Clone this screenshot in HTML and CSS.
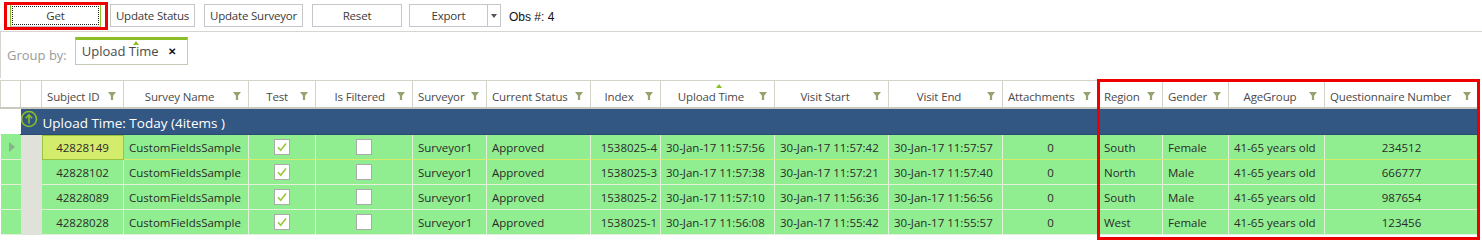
FILE: index.html
```html
<!DOCTYPE html>
<html>
    <head>
        <title>Survey Results</title>
        <link rel="stylesheet" href="styles.css">
    </head>
    <body>
        <div class="toolbar">
            <button class="tb-btn btn-get">Get</button>
            <button class="tb-btn btn-status">Update Status</button>
            <button class="tb-btn btn-surveyor">Update Surveyor</button>
            <button class="tb-btn btn-reset">Reset</button>
            <div class="split">
                <button class="tb-btn btn-export">Export</button>
                <button class="tb-btn btn-drop"><span class="caret"></span></button>
            </div>
            <span class="obs">Obs #: 4</span>
        </div>

        <div class="groupbar">
            <span class="group-label">Group by:</span>
            <div class="chip">
                <span class="chip-text">Upload T<span class="sort-mark"></span>ime</span>
                <span class="chip-close">&#x2715;</span>
            </div>
        </div>

        <div class="grid">
            <table>
                <colgroup>
                    <col style="width:20px"><col style="width:21px"><col style="width:82px">
                    <col style="width:125px"><col style="width:67px"><col style="width:97px">
                    <col style="width:74px"><col style="width:104px"><col style="width:70px">
                    <col style="width:114px"><col style="width:114px"><col style="width:114px">
                    <col style="width:96px"><col style="width:64px"><col style="width:66px">
                    <col style="width:96px"><col style="width:154px">
                </colgroup>
                <thead>
                    <tr>
                        <th></th>
                        <th></th>
                        <th><div class="hd left"><span class="hd-text">Subject ID</span><span class="filter"></span></div></th>
                        <th><div class="hd center"><span class="hd-text">Survey Name</span><span class="filter"></span></div></th>
                        <th><div class="hd right"><span class="hd-text">Test</span><span class="filter"></span></div></th>
                        <th><div class="hd right"><span class="hd-text">Is Filtered</span><span class="filter"></span></div></th>
                        <th><div class="hd left"><span class="hd-text">Surveyor</span><span class="filter"></span></div></th>
                        <th><div class="hd left"><span class="hd-text">Current Status</span><span class="filter"></span></div></th>
                        <th><div class="hd center"><span class="hd-text">Index</span><span class="filter"></span></div></th>
                        <th class="sorted"><div class="hd center"><span class="hd-text">Upload Time</span><span class="filter"></span></div></th>
                        <th><div class="hd center"><span class="hd-text">Visit Start</span><span class="filter"></span></div></th>
                        <th><div class="hd center"><span class="hd-text">Visit End</span><span class="filter"></span></div></th>
                        <th><div class="hd left"><span class="hd-text">Attachments</span><span class="filter"></span></div></th>
                        <th><div class="hd left"><span class="hd-text">Region</span><span class="filter"></span></div></th>
                        <th><div class="hd left"><span class="hd-text">Gender</span><span class="filter"></span></div></th>
                        <th><div class="hd center"><span class="hd-text">AgeGroup</span><span class="filter"></span></div></th>
                        <th><div class="hd left"><span class="hd-text">Questionnaire Number</span><span class="filter"></span></div></th>
                    </tr>
                </thead>
                <tbody>
                    <tr class="group-row">
                        <td class="blank"></td>
                        <td colspan="16">
                            <div class="group-title">
                                <svg class="group-icon" viewBox="0 0 18 18" aria-hidden="true">
                                    <circle cx="9" cy="9" r="7.5" fill="none" stroke="#8cbf26" stroke-width="1.6" />
                                    <path d="M9 13.5V5M5.8 8.2L9 5l3.2 3.2" fill="none" stroke="#8cbf26" stroke-width="1.6" />
                                </svg>
                                Upload Time: Today (4items )
                            </div>
                        </td>
                    </tr>
                    <tr class="data-row current">
                        <td class="ind"><span class="arrow"></span></td>
                        <td class="gutter"></td>
                        <td class="c focus">42828149</td>
                        <td class="l">CustomFieldsSample</td>
                        <td class="c"><span class="box checked"><svg viewBox="0 0 14 14"><path d="M3 7.2l2.7 3L11 3.5" /></svg></span></td>
                        <td class="c"><span class="box"></span></td>
                        <td class="l">Surveyor1</td>
                        <td class="l">Approved</td>
                        <td class="r">1538025-4</td>
                        <td class="l">30-Jan-17 11:57:56</td>
                        <td class="l">30-Jan-17 11:57:42</td>
                        <td class="l">30-Jan-17 11:57:57</td>
                        <td class="c">0</td>
                        <td class="l">South</td>
                        <td class="l">Female</td>
                        <td class="l">41-65 years old</td>
                        <td class="c">234512</td>
                    </tr>
                    <tr class="data-row">
                        <td class="ind"></td>
                        <td class="gutter"></td>
                        <td class="c">42828102</td>
                        <td class="l">CustomFieldsSample</td>
                        <td class="c"><span class="box checked"><svg viewBox="0 0 14 14"><path d="M3 7.2l2.7 3L11 3.5" /></svg></span></td>
                        <td class="c"><span class="box"></span></td>
                        <td class="l">Surveyor1</td>
                        <td class="l">Approved</td>
                        <td class="r">1538025-3</td>
                        <td class="l">30-Jan-17 11:57:38</td>
                        <td class="l">30-Jan-17 11:57:21</td>
                        <td class="l">30-Jan-17 11:57:40</td>
                        <td class="c">0</td>
                        <td class="l">North</td>
                        <td class="l">Male</td>
                        <td class="l">41-65 years old</td>
                        <td class="c">666777</td>
                    </tr>
                    <tr class="data-row">
                        <td class="ind"></td>
                        <td class="gutter"></td>
                        <td class="c">42828089</td>
                        <td class="l">CustomFieldsSample</td>
                        <td class="c"><span class="box checked"><svg viewBox="0 0 14 14"><path d="M3 7.2l2.7 3L11 3.5" /></svg></span></td>
                        <td class="c"><span class="box"></span></td>
                        <td class="l">Surveyor1</td>
                        <td class="l">Approved</td>
                        <td class="r">1538025-2</td>
                        <td class="l">30-Jan-17 11:57:10</td>
                        <td class="l">30-Jan-17 11:56:36</td>
                        <td class="l">30-Jan-17 11:56:56</td>
                        <td class="c">0</td>
                        <td class="l">South</td>
                        <td class="l">Male</td>
                        <td class="l">41-65 years old</td>
                        <td class="c">987654</td>
                    </tr>
                    <tr class="data-row">
                        <td class="ind"></td>
                        <td class="gutter"></td>
                        <td class="c">42828028</td>
                        <td class="l">CustomFieldsSample</td>
                        <td class="c"><span class="box checked"><svg viewBox="0 0 14 14"><path d="M3 7.2l2.7 3L11 3.5" /></svg></span></td>
                        <td class="c"><span class="box"></span></td>
                        <td class="l">Surveyor1</td>
                        <td class="l">Approved</td>
                        <td class="r">1538025-1</td>
                        <td class="l">30-Jan-17 11:56:08</td>
                        <td class="l">30-Jan-17 11:55:42</td>
                        <td class="l">30-Jan-17 11:55:57</td>
                        <td class="c">0</td>
                        <td class="l">West</td>
                        <td class="l">Female</td>
                        <td class="l">41-65 years old</td>
                        <td class="c">123456</td>
                    </tr>
                </tbody>
            </table>
        </div>

        <!-- red annotation frames drawn over the screenshot -->
        <div class="mark mark-get"></div>
        <div class="mark mark-cols"></div>
    </body>
</html>
```

FILE: styles.css
```css
:root {
    --row-green: #90ee90;
    --group-blue: #335783;
    --accent: #8cbf26;
    --line: #d4d4c8;
    --text: #2b2b2b;
    --head-text: #4a4a4a;
    --mark-red: #ee0000;
}

body {
    margin: 0;
    width: 1482px;
    height: 244px;
    overflow: hidden;
    background: #ffffff;
    font-family: 'Open Sans', 'Noto Sans', sans-serif;
    font-size: 11.5px;
    color: var(--text);
    position: relative;
}

/* toolbar */

.toolbar {
    height: 32px;
    border-bottom: 1px solid #d6d6d0;
    display: flex;
    align-items: center;
    padding-left: 10px;
    box-sizing: border-box;
}

.tb-btn {
    height: 23px;
    background: #ffffff;
    border: 1px solid #c6c6c6;
    font-family: inherit;
    font-size: 11.5px;
    letter-spacing: -0.2px;
    color: #3a3a3a;
    padding: 0;
    margin: 0 9px 0 0;
    cursor: pointer;
}

.btn-get {
    width: 91px;
    border-left: 1px solid var(--accent);
    border-right: 1px solid var(--accent);
    outline: 1px dotted #222;
    outline-offset: -3px;
}

.btn-status { width: 85px; }
.btn-surveyor { width: 99px; }
.btn-reset { width: 90px; margin-right: 7px; }

.split {
    display: flex;
    margin-right: 8px;
}

.btn-export {
    width: 79px;
    margin: 0;
}

.btn-drop {
    width: 13px;
    margin: 0;
    border-left: none;
    display: flex;
    align-items: center;
    justify-content: center;
}

.caret {
    width: 0;
    height: 0;
    border-left: 3px solid transparent;
    border-right: 3px solid transparent;
    border-top: 4px solid #555;
}

.obs {
    font-family: 'Liberation Sans', Arial, sans-serif;
    font-size: 12px;
    color: #111;
    margin-top: 2px;
}

/* group by panel */

.groupbar {
    height: 46px;
    border-left: 1px solid #d6d6d0;
    display: flex;
    align-items: flex-start;
    padding: 5px 0 0 6px;
    box-sizing: border-box;
}

.group-label {
    font-size: 13px;
    color: #9a9a9a;
    margin-top: 9px;
    margin-right: 8px;
}

.chip {
    width: 113px;
    height: 28px;
    box-sizing: border-box;
    border: 1px solid #c8c8b4;
    border-top: 3px solid var(--accent);
    display: flex;
    align-items: center;
    padding: 0 0 2px 6px;
}

.chip-text {
    font-size: 13px;
    color: #4a4a4a;
    position: relative;
    flex: 1;
}

.sort-mark {
    position: absolute;
    left: 51px;
    top: -1px;
    width: 0;
    height: 0;
    border-left: 3px solid transparent;
    border-right: 3px solid transparent;
    border-bottom: 4px solid var(--accent);
}

.chip-close {
    font-size: 10px;
    font-weight: 700;
    color: #111;
    margin-right: 11px;
}

/* grid */

.grid {
    padding-top: 2px;
}

table {
    width: 1478px;
    table-layout: fixed;
    border-collapse: collapse;
}

th,
td {
    padding: 0;
    white-space: nowrap;
    overflow: hidden;
}

th {
    height: 26px;
    border: 1px solid var(--line);
    border-bottom: 2px solid #c8c8bc;
    font-weight: 400;
    letter-spacing: -0.15px;
    color: var(--head-text);
    background: #ffffff;
    position: relative;
}

.hd {
    display: flex;
    align-items: center;
    padding: 4px 7px 0 5px;
}

.hd-text {
    flex: 1;
    overflow: hidden;
}

.hd.left .hd-text { text-align: left; }
.hd.center .hd-text { text-align: center; }
.hd.right .hd-text { text-align: right; padding-right: 9px; }

.filter {
    width: 8px;
    height: 8px;
    flex: none;
    margin-left: 3px;
    background: #95a36e;
    clip-path: polygon(0 0, 100% 0, 64% 48%, 64% 100%, 36% 100%, 36% 48%);
}

.sorted::before {
    content: "";
    position: absolute;
    left: 55px;
    top: 3px;
    border-left: 3px solid transparent;
    border-right: 3px solid transparent;
    border-bottom: 4px solid var(--accent);
}

.group-row td {
    height: 25px;
    background: var(--group-blue);
    border-bottom: 1px solid #2a4a70;
}

.group-row td.blank {
    background: #ffffff;
    border: none;
}

.group-title {
    display: flex;
    align-items: center;
    color: #ffffff;
    font-size: 13.5px;
    height: 25px;
    padding-top: 2px;
    box-sizing: border-box;
}

.group-icon {
    width: 18px;
    height: 18px;
    margin: -8px 5px 0 -1px;
    flex: none;
}

.data-row td {
    height: 24px;
    background: var(--row-green);
    border: 1px solid #e4f2dc;
    color: var(--text);
}

.data-row.current td {
    border-bottom-color: #d8ec6c;
}

.data-row td.ind {
    border-left: none;
    border-color: var(--row-green);
    border-bottom-color: #e4f2dc;
}

.data-row td.gutter {
    background: #e0e1d9;
    border-color: #e0e1d9;
}

.data-row td.focus {
    background: #d4ec6c;
    outline: 1px solid #9bc43c;
    outline-offset: -1px;
}

.arrow {
    display: block;
    width: 0;
    height: 0;
    margin-left: 8px;
    border-top: 5px solid transparent;
    border-bottom: 5px solid transparent;
    border-left: 6px solid #86b486;
}

td.l { text-align: left; padding-left: 5px; }
td.c { text-align: center; }
td.r { text-align: right; padding-right: 3px; }

.box {
    display: inline-block;
    width: 14px;
    height: 14px;
    background: #ffffff;
    border: 1px solid #ababab;
    vertical-align: middle;
}

.box svg {
    width: 14px;
    height: 14px;
    display: block;
}

.box svg path {
    fill: none;
    stroke: #9cc83c;
    stroke-width: 1.7;
}

/* annotation frames */

.mark {
    position: absolute;
    border: 3px solid var(--mark-red);
    box-sizing: border-box;
    pointer-events: none;
}

.mark-get {
    left: 4px;
    top: 2px;
    width: 104px;
    height: 28px;
}

.mark-cols {
    left: 1097px;
    top: 79px;
    width: 383px;
    height: 161px;
}
```
